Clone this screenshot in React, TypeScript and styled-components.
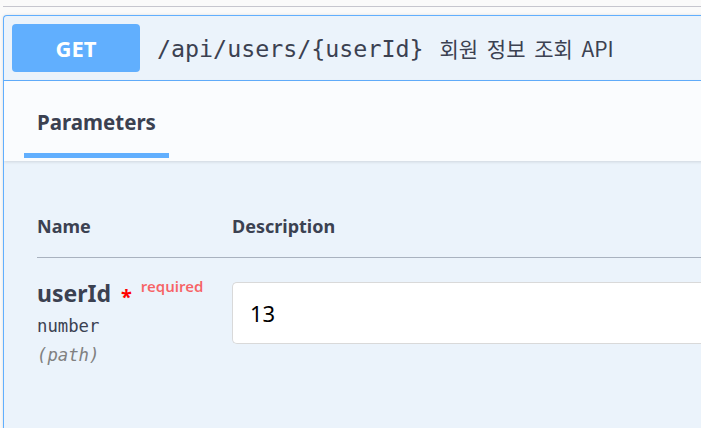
import React from "react";
import styled, { createGlobalStyle } from "styled-components";

const Global = createGlobalStyle`
  html, body { margin: 0; padding: 0; background: #fafafa; overflow: hidden; }
  body { font-family: "Noto Sans", "Noto Sans CJK KR", sans-serif; color: #3b4151; }
`;

const Page = styled.div`
  padding: 6px 0 0 3px;
  width: 720px;
`;

const TopRule = styled.div`
  height: 1px;
  background: #c6c6ce;
  margin-bottom: 8px;
`;

const Card = styled.section`
  border: 1px solid #61affe;
  border-right: none;
  border-bottom: none;
  border-radius: 4px 0 0 0;
  background: #ebf3fb;
  box-shadow: 0 0 3px rgba(0, 0, 0, 0.12);
  overflow: hidden;
  height: 420px;
`;

const Summary = styled.div`
  display: flex;
  align-items: center;
  gap: 17px;
  padding: 8px;
  border-bottom: 1px solid #61affe;
`;

const Method = styled.span`
  width: 128px;
  height: 48px;
  border-radius: 4px;
  background: #61affe;
  color: #fff;
  font-weight: 700;
  font-size: 22px;
  display: flex;
  align-items: center;
  justify-content: center;
`;

const Path = styled.span`
  font-family: "DejaVu Sans Mono", "Liberation Mono", monospace;
  font-size: 23.3px;
  color: #3b4151;
`;

const Summ = styled.span`
  font-family: "Noto Sans CJK KR", "Noto Sans", sans-serif;
  font-size: 21px;
  word-spacing: 4px;
  color: #3b4151;
  margin-left: -1px;
`;

const TabBar = styled.div`
  background: #fafcfe;
  height: 80px;
  padding-left: 20px;
  display: flex;
  box-shadow: 0 1px 3px rgba(0, 0, 0, 0.12);
  position: relative;
`;

const Tab = styled.div`
  padding: 28px 13px 0;
  display: flex;
  flex-direction: column;
  gap: 17px;
`;

const TabLabel = styled.span`
  font-weight: 700;
  font-size: 20.5px;
  line-height: 27px;
  color: #3b4151;
`;

const TabLine = styled.span`
  height: 5px;
  background: #61affe;
  margin: 0 -13px;
`;

const Body = styled.div`
  padding: 53px 0 0 33px;
`;

const Row = styled.div<{ $head?: boolean }>`
  display: grid;
  grid-template-columns: 195px 1fr;
  align-items: start;
  ${(p) =>
    p.$head
      ? `padding-bottom: 18px; border-bottom: 1px solid #a9b2bf;`
      : `padding-top: 22px;`}
`;

const HeadCell = styled.span`
  font-weight: 700;
  font-size: 18px;
  line-height: 25px;
  color: #3b4151;
`;

const NameCell = styled.div`
  display: flex;
  flex-direction: column;
  margin-top: -1px;
`;

const NameLine = styled.div`
  display: flex;
  align-items: flex-start;
  margin-bottom: 1px;
`;

const ParamName = styled.span`
  font-weight: 700;
  font-size: 23px;
  line-height: 29px;
  color: #3b4151;
`;

const Star = styled.span`
  color: red;
  font-size: 20px;
  font-weight: 700;
  line-height: 28px;
  margin: 4px 0 0 10px;
`;

const Required = styled.span`
  color: rgba(255, 0, 0, 0.6);
  font-size: 15px;
  font-weight: 600;
  line-height: 18px;
  margin: -2px 0 0 9px;
`;

const Mono = styled.span<{ $italic?: boolean }>`
  font-family: "DejaVu Sans Mono", "Liberation Mono", monospace;
  font-size: 17.3px;
  line-height: 29px;
  color: ${(p) => (p.$italic ? "#808080" : "#3b4151")};
  font-style: ${(p) => (p.$italic ? "italic" : "normal")};
`;

const Input = styled.div`
  margin-top: 2px;
  height: 60px;
  background: #fff;
  border: 1px solid #d9d9d9;
  border-right: none;
  border-radius: 5px 0 0 5px;
  display: flex;
  align-items: center;
  padding-left: 17px;
  font-size: 22px;
  color: #000;
`;

export default function App() {
  return (
    <>
      <Global />
      <Page>
        <TopRule />
        <Card>
          <Summary>
            <Method>GET</Method>
            <Path>/api/users/{"{userId}"}</Path>
            <Summ>회원 정보 조회 API</Summ>
          </Summary>
          <TabBar>
            <Tab>
              <TabLabel>Parameters</TabLabel>
              <TabLine />
            </Tab>
          </TabBar>
          <Body>
            <Row $head>
              <HeadCell>Name</HeadCell>
              <HeadCell>Description</HeadCell>
            </Row>
            <Row>
              <NameCell>
                <NameLine>
                  <ParamName>userId</ParamName>
                  <Star>*</Star>
                  <Required>required</Required>
                </NameLine>
                <Mono>number</Mono>
                <Mono $italic>(path)</Mono>
              </NameCell>
              <Input>13</Input>
            </Row>
          </Body>
        </Card>
      </Page>
    </>
  );
}
